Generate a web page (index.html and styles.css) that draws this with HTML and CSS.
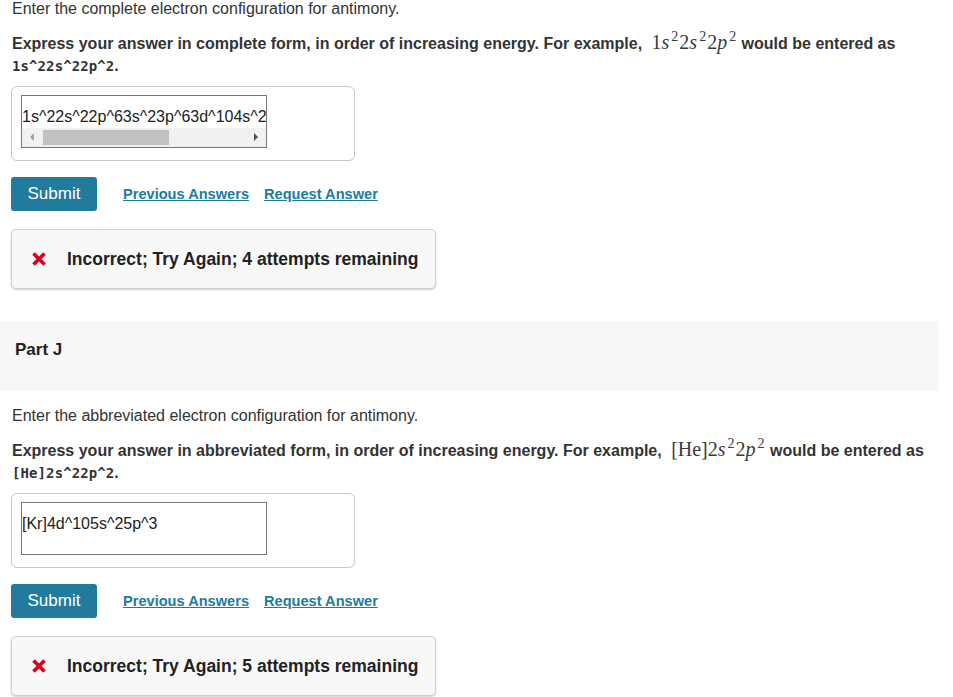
FILE: index.html
```html
<!DOCTYPE html>
<html>
<head>
<meta charset="utf-8">
<link rel="stylesheet" href="styles.css">
</head>
<body>
<section class="part part-first">
  <p class="intro">Enter the complete electron configuration for antimony.</p>
  <p class="instr">Express your answer in complete form, in order of increasing energy. For example, <span class="math">1<i>s</i><sup>2</sup>2<i>s</i><sup>2</sup>2<i>p</i><sup>2</sup></span> would be entered as <br><code>1s^22s^22p^2</code>.</p>
  <div class="answer-box">
    <div class="field field-scroll">
      <div class="field-text">1s^22s^22p^63s^23p^63d^104s^24d^105s^25p^3</div>
      <div class="hscroll">
        <span class="arrow arrow-left"></span>
        <span class="thumb"></span>
        <span class="arrow arrow-right"></span>
      </div>
    </div>
  </div>
  <div class="actions">
    <button class="submit">Submit</button>
    <a class="link" href="#">Previous Answers</a>
    <a class="link" href="#">Request Answer</a>
  </div>
  <div class="feedback">
    <svg class="xicon" width="16" height="16" viewBox="0 0 16 16"><path d="M2.5 2.5 L13.5 13.5 M13.5 2.5 L2.5 13.5" stroke="#d9001b" stroke-width="3.6" stroke-linecap="butt"/></svg>
    <span>Incorrect; Try Again; 4 attempts remaining</span>
  </div>
</section>

<header class="part-head"><h2>Part J</h2></header>

<section class="part">
  <p class="intro">Enter the abbreviated electron configuration for antimony.</p>
  <p class="instr">Express your answer in abbreviated form, in order of increasing energy. For example, <span class="math">[He]2<i>s</i><sup>2</sup>2<i>p</i><sup>2</sup></span> would be entered as <br><code>[He]2s^22p^2</code>.</p>
  <div class="answer-box">
    <div class="field">
      <div class="field-text">[Kr]4d^105s^25p^3</div>
    </div>
  </div>
  <div class="actions">
    <button class="submit">Submit</button>
    <a class="link" href="#">Previous Answers</a>
    <a class="link" href="#">Request Answer</a>
  </div>
  <div class="feedback">
    <svg class="xicon" width="16" height="16" viewBox="0 0 16 16"><path d="M2.5 2.5 L13.5 13.5 M13.5 2.5 L2.5 13.5" stroke="#d9001b" stroke-width="3.6" stroke-linecap="butt"/></svg>
    <span>Incorrect; Try Again; 5 attempts remaining</span>
  </div>
</section>
</body>
</html>
```
FILE: styles.css
```css
* { box-sizing: border-box; }
html, body { margin: 0; padding: 0; background: #fff; }
body {
  font-family: "Liberation Sans", Arial, sans-serif;
  color: #333;
  font-size: 16px;
  width: 953px;
  height: 697px;
  overflow: hidden;
}
.part { padding: 0 0 0 11px; }
.intro {
  margin: 0 0 0 1px;
  font-size: 16px;
  line-height: 18px;
}
.instr {
  margin: 15px 0 0 1px;
  font-size: 16px;
  font-weight: bold;
  line-height: 22px;
}
.math {
  font-family: "Liberation Serif", "Times New Roman", serif;
  font-weight: normal;
  font-size: 20px;
  line-height: 0;
  color: #3a3a3a;
  margin-left: 5px;
}
.math i { font-style: italic; }
.math sup {
  font-size: 14px;
  line-height: 0;
  vertical-align: 0;
  position: relative;
  top: -8px;
  margin-left: 2px;
  margin-right: 1px;
}
code {
  font-family: "DejaVu Sans Mono", monospace;
  font-size: 14px;
  line-height: 0;
  letter-spacing: 0.1px;
  font-weight: bold;
}
.answer-box {
  margin-top: 9px;
  width: 344px;
  border: 1px solid #c8c8c8;
  border-radius: 6px;
  padding: 8px 0 12px 9px;
}
.field {
  width: 246px;
  height: 53px;
  border: 1px solid #767676;
  background: #fff;
  position: relative;
  overflow: hidden;
}
.field-text {
  font-size: 16px;
  line-height: 20px;
  white-space: nowrap;
  padding: 11px 0 0 0;
  color: #222;
}
.hscroll {
  position: absolute;
  left: 0; right: 0; bottom: 0;
  height: 19px;
  background: #f1f1f1;
}
.thumb {
  position: absolute;
  left: 21px;
  top: 2px;
  width: 126px;
  height: 15px;
  background: #c1c1c1;
}
.arrow {
  position: absolute;
  top: 5px;
  width: 0; height: 0;
  border-top: 4px solid transparent;
  border-bottom: 4px solid transparent;
}
.arrow-left { left: 8px; border-right: 4px solid #a3a3a3; }
.arrow-right { right: 8px; border-left: 4px solid #505050; }
.actions {
  margin-top: 16px;
  display: flex;
  align-items: center;
  height: 34px;
}
.submit {
  width: 86px;
  height: 34px;
  background: #217b9d;
  color: #fff;
  border: 0;
  border-radius: 3px;
  font-family: "Liberation Sans", Arial, sans-serif;
  font-size: 17px;
  padding: 0;
  margin-right: 26px;
}
.link {
  color: #1c7ca0;
  font-weight: bold;
  font-size: 14.6px;
  text-decoration: underline;
  margin-right: 15px;
}
.feedback {
  margin-top: 18px;
  width: 425px;
  height: 60px;
  background: #f8f8f8;
  border: 1px solid #cfcfcf;
  border-radius: 5px;
  box-shadow: 0 1px 2px rgba(0,0,0,0.18);
  display: flex;
  align-items: center;
  padding-left: 19px;
}
.xicon { flex: none; margin-right: 20px; }
.feedback span {
  font-weight: bold;
  font-size: 17.5px;
  color: #222;
}
.part-head {
  margin-top: 32px;
  width: 939px;
  height: 70px;
  background: #f7f7f7;
  padding: 19px 0 0 15px;
}
.part-head h2 {
  margin: 0;
  font-size: 17px;
  line-height: 20px;
  font-weight: bold;
  color: #222;
}
.part-head + .part { padding-top: 16px; }
```
